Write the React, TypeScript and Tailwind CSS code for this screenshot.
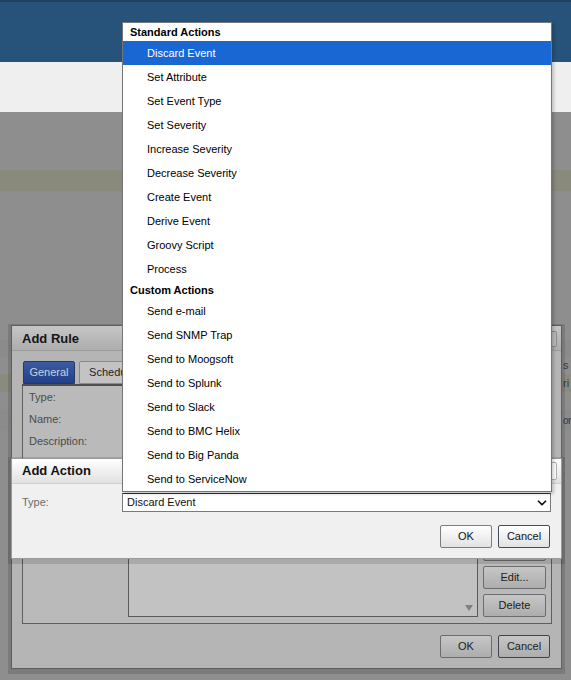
import { ChevronDown } from "lucide-react";

const standardActions = [
  "Discard Event",
  "Set Attribute",
  "Set Event Type",
  "Set Severity",
  "Increase Severity",
  "Decrease Severity",
  "Create Event",
  "Derive Event",
  "Groovy Script",
  "Process",
];

const customActions = [
  "Send e-mail",
  "Send SNMP Trap",
  "Send to Moogsoft",
  "Send to Splunk",
  "Send to Slack",
  "Send to BMC Helix",
  "Send to Big Panda",
  "Send to ServiceNow",
];

function LightButton({ label, focused }: { label: string; focused?: boolean }) {
  return (
    <div
      className={`flex h-[23px] w-[52px] items-center justify-center rounded-[2px] border bg-linear-to-b from-white to-[#e2e2e2] text-[11px] text-[#111] ${
        focused ? "border-[#454c5e]" : "border-[#7d7d7d]"
      }`}
    >
      {label}
    </div>
  );
}

function DimButton({ label, w = "w-[52px]", focused }: { label: string; w?: string; focused?: boolean }) {
  return (
    <div
      className={`flex h-[23px] ${w} items-center justify-center rounded-[2px] border bg-linear-to-b from-[#c6c6c6] to-[#adadad] text-[11px] text-[#1c1c1c] ${
        focused ? "border-[#3f4350]" : "border-[#6c6c6c]"
      }`}
    >
      {label}
    </div>
  );
}

export default function App() {
  return (
    <div className="relative h-[680px] w-[571px] overflow-hidden bg-[#8e8e8e] font-['Liberation_Sans',Arial,sans-serif] text-[11px]">
      {/* page behind the modals */}
      <div className="h-[62px] border-t-2 border-[#1f405e] bg-[#27537a]" />
      <div className="h-[50px] bg-[#efefef]" />
      <div className="h-[58px]" />
      <div className="h-[21px] bg-[#8a8a7c]" />
      <div className="h-[149px]" />
      <div className="h-[17px] bg-[#8b8b8b]" />
      <div className="flex h-[17px] items-center whitespace-nowrap pl-[563px] text-[#2f3a4c]">
        s<span className="ml-[2px] inline-block h-[6px] w-[4px] bg-[#c27a26]" />
      </div>
      <div className="flex h-[18px] items-center whitespace-nowrap bg-[#8a8a7e] pl-[563px] text-[#2f3a4c]">ri</div>
      <div className="h-[18px]" />
      <div className="flex h-[20px] items-center whitespace-nowrap bg-[#8b8b8b] pl-[563px] text-[10px] tracking-[-0.5px] text-[#2f3a4c]">on</div>

      {/* Add Rule dialog (dimmed) */}
      <div className="absolute left-[11px] top-[325px] z-10 flex h-[344px] w-[551px] flex-col border border-[#5e5e5e] bg-[#b5b5b5] shadow-[0_2px_0_3px_rgba(0,0,0,0.13)]">
        <div className="flex h-[25px] shrink-0 items-center justify-between border-b border-[#9b9b9b] bg-linear-to-b from-[#c6c6c6] to-[#adadad] pl-[10px] pr-[4px] pt-[1px]">
          <span className="text-[13px] font-bold text-[#151515]">Add Rule</span>
          <span className="h-[16px] w-[20px] rounded-[2px] border border-[#8a8a8a] bg-[#bdbdbd]" />
        </div>
        <div className="flex flex-1 flex-col pl-[10px] pr-[9px] pt-[10px]">
          <div className="flex h-[23px] gap-[4px] pl-[1px]">
            <div className="flex w-[52px] items-center justify-center rounded-t-[2px] border border-[#24396a] bg-linear-to-b from-[#3b5ba3] to-[#243f86] text-[#c8d0e2]">
              General
            </div>
            <div className="flex w-[66px] items-center justify-center rounded-t-[2px] border border-[#8a8a8a] bg-[#c3c3c3] text-[#1e1e1e]">
              Schedule
            </div>
          </div>
          <div className="h-[2px] bg-[#4f4f4f]" />
          <div className="flex h-[238px] flex-col border-x border-b border-[#5e5e5e] bg-[#bababa] text-[#4a4a4a]">
            <div className="flex h-[22px] items-center pl-[6px] pt-[1px]">Type:</div>
            <div className="flex h-[22px] items-center pl-[6px] pt-[1px]">Name:</div>
            <div className="flex h-[22px] items-center pl-[6px] pt-[1px]">Description:</div>
            <div className="mt-auto flex items-end gap-[5px] pb-[6px] pl-[105px]">
              <div className="relative h-[150px] w-[350px] border border-[#5a5a5a] bg-[#c2c2c2]">
                <div className="absolute bottom-[5px] right-[4px] h-0 w-0 border-x-[4px] border-t-[6px] border-x-transparent border-t-[#808080]" />
              </div>
              <div className="flex w-[63px] flex-col gap-[5px]">
                <DimButton label="Add..." w="w-[63px]" />
                <DimButton label="Edit..." w="w-[63px]" />
                <DimButton label="Delete" w="w-[63px]" />
              </div>
            </div>
          </div>
          <div className="mt-[11px] flex justify-end gap-[6px] pr-[2px]">
            <DimButton label="OK" />
            <DimButton label="Cancel" focused />
          </div>
        </div>
      </div>

      {/* Add Action dialog */}
      <div className="absolute left-[11px] top-[458px] z-20 flex h-[101px] w-[551px] flex-col border border-[#9a9a9a] bg-[#f0f0f0] shadow-[0_2px_0_3px_rgba(0,0,0,0.12)]">
        <div className="flex h-[25px] shrink-0 items-center justify-between border-b border-[#cfcfcf] bg-linear-to-b from-white to-[#e1e1e1] pl-[10px] pr-[4px]">
          <span className="text-[13px] font-bold text-[#111]">Add Action</span>
          <span className="h-[18px] w-[20px] rounded-[2px] border border-[#b0b0b0] bg-white" />
        </div>
        <div className="flex items-center pl-[10px] pr-[10px] pt-[9px]">
          <span className="w-[100px] text-[#6a6a6a]">Type:</span>
          <div className="relative flex h-[19px] flex-1 items-center border border-[#7a7a7a] border-t-[#333] bg-white pl-[4px] text-[#111]">
            Discard Event
            <ChevronDown className="absolute right-[1px] text-[#111]" size={14} strokeWidth={3} />
          </div>
        </div>
        <div className="mt-[13px] flex justify-end gap-[6px] pr-[11px]">
          <LightButton label="OK" />
          <LightButton label="Cancel" focused />
        </div>
      </div>

      {/* open select list */}
      <div className="absolute left-[122px] top-[22px] z-30 w-[430px] border border-[#767676] bg-white text-[11px] text-black shadow-[2px_2px_3px_rgba(0,0,0,0.2)]">
        <div className="flex h-[18px] items-center pl-[7px] pt-[1px] font-bold">Standard Actions</div>
        {standardActions.map((a, i) => (
          <div
            key={a}
            className={`flex h-[24px] items-center pl-[24px] ${i === 0 ? "bg-[#1967d2] text-white" : ""}`}
          >
            {a}
          </div>
        ))}
        <div className="flex h-[18px] items-center pl-[7px] pt-[1px] font-bold">Custom Actions</div>
        {customActions.map((a) => (
          <div key={a} className="flex h-[24px] items-center pl-[24px]">
            {a}
          </div>
        ))}
      </div>
    </div>
  );
}
